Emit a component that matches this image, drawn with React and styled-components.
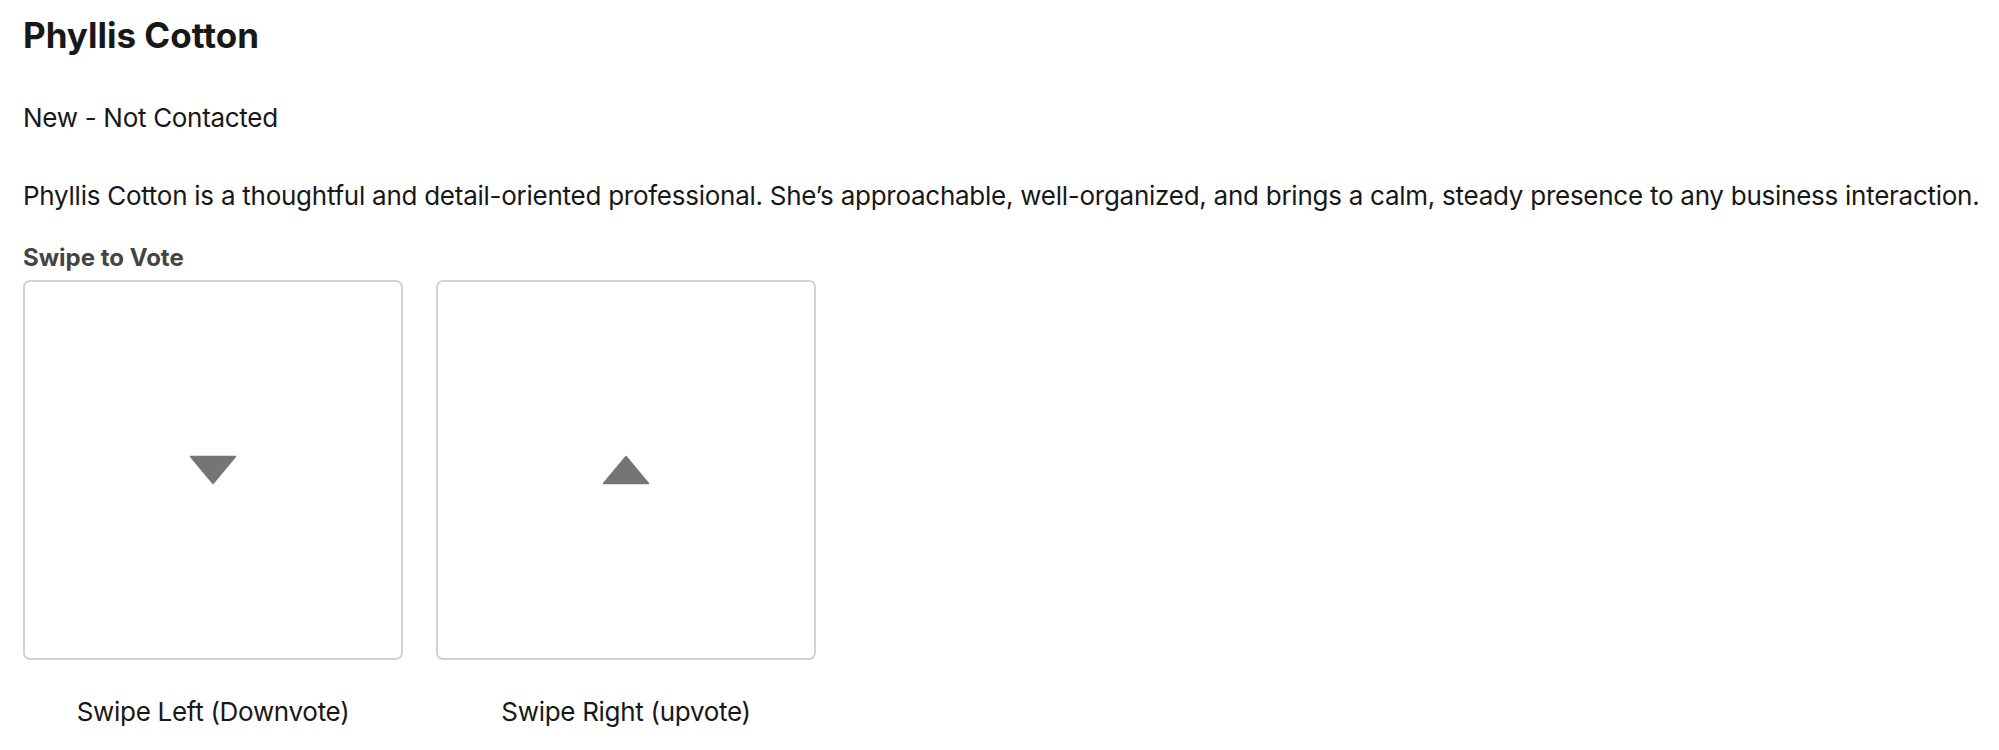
import React from "react";
import styled, { createGlobalStyle } from "styled-components";

const GlobalStyle = createGlobalStyle`
  body {
    margin: 0;
    background: #ffffff;
    font-family: Inter, "Noto Sans", "Liberation Sans", sans-serif;
    color: #181818;
  }
`;

const Page = styled.div`
  padding: 15px 23px 0 23px;
`;

const Name = styled.h1`
  margin: 0;
  font-size: 35px;
  line-height: 40px;
  font-weight: 700;
  color: #181818;
`;

const Status = styled.p`
  margin: 47px 0 0 0;
  font-size: 26px;
  line-height: 32px;
  letter-spacing: -0.3px;
`;

const Description = styled.p`
  margin: 46px 0 0 0;
  font-size: 26px;
  line-height: 32px;
  letter-spacing: -0.26px;
  white-space: nowrap;
`;

const VoteLabel = styled.div`
  margin-top: 32px;
  font-size: 24px;
  line-height: 28px;
  font-weight: 700;
  color: #444444;
`;

const VoteRow = styled.div`
  display: flex;
  gap: 33px;
  margin-top: 8px;
`;

const VoteOption = styled.div`
  display: flex;
  flex-direction: column;
  align-items: center;
  width: 380px;
`;

const VoteCard = styled.button`
  width: 380px;
  height: 380px;
  box-sizing: border-box;
  border: 2px solid #d2d2d2;
  border-radius: 7px;
  background: #ffffff;
  display: flex;
  align-items: center;
  justify-content: center;
  cursor: pointer;
  padding: 0;
`;

const Caption = styled.div`
  margin-top: 36px;
  font-size: 26px;
  line-height: 32px;
  letter-spacing: -0.3px;
  color: #181818;
`;

const Arrow = ({ up }) => (
  <svg width="48" height="30" viewBox="0 0 48 30">
    {up ? (
      <path d="M24 1.5 L46.5 28.5 L1.5 28.5 Z" fill="#757575" stroke="#757575" strokeWidth="1.5" strokeLinejoin="round" />
    ) : (
      <path d="M1.5 1.5 L46.5 1.5 L24 28.5 Z" fill="#757575" stroke="#757575" strokeWidth="1.5" strokeLinejoin="round" />
    )}
  </svg>
);

const options = [
  { key: "down", up: false, label: "Swipe Left (Downvote)" },
  { key: "up", up: true, label: "Swipe Right (upvote)" }
];

export default function App() {
  return (
    <Page>
      <GlobalStyle />
      <Name>Phyllis Cotton</Name>
      <Status>New - Not Contacted</Status>
      <Description>
        Phyllis Cotton is a thoughtful and detail-oriented professional. She’s approachable, well-organized, and brings a calm, steady presence to any business interaction.
      </Description>
      <VoteLabel>Swipe to Vote</VoteLabel>
      <VoteRow>
        {options.map(option => (
          <VoteOption key={option.key}>
            <VoteCard type="button" aria-label={option.label}>
              <Arrow up={option.up} />
            </VoteCard>
            <Caption>{option.label}</Caption>
          </VoteOption>
        ))}
      </VoteRow>
    </Page>
  );
}
